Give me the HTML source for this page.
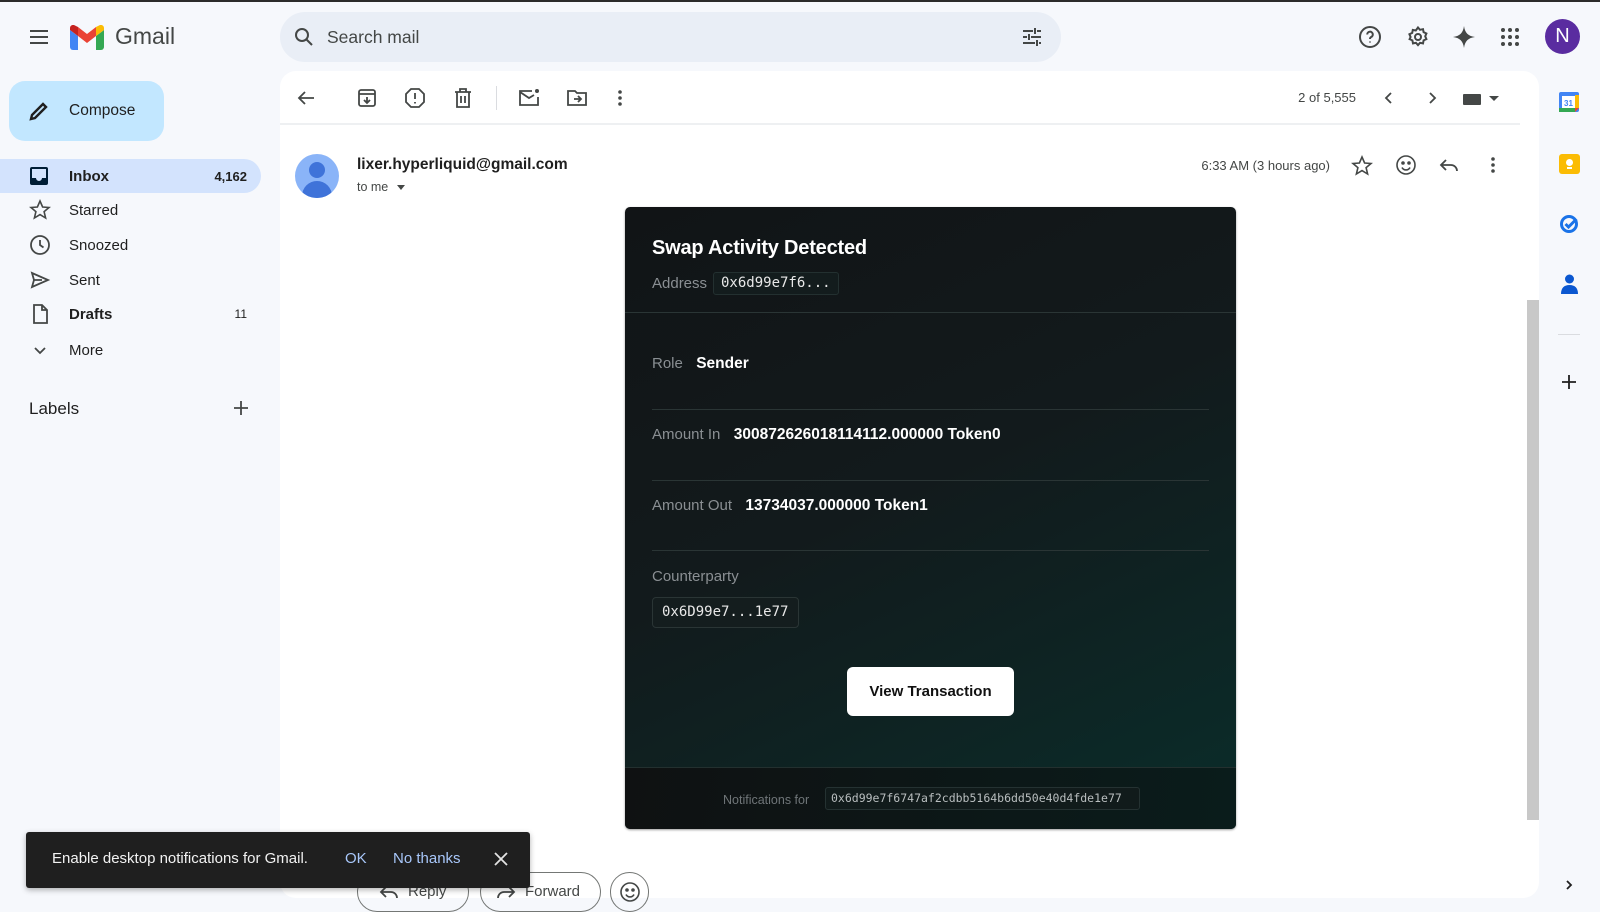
<!DOCTYPE html>
<html><head><meta charset="utf-8"><style>
*{box-sizing:border-box;margin:0;padding:0}
body{width:1600px;height:908px;overflow:hidden;background:#f6f8fc;font-family:"Liberation Sans",Arial,sans-serif;color:#1f1f1f;position:relative}
.a{position:absolute}
.ic{position:absolute;width:24px;height:24px;fill:none;stroke:#444746;stroke-width:2}
.nav{position:absolute;left:0;width:261px;height:34px;font-size:15px;display:flex;align-items:center}
.nav .t{position:absolute;left:69px}
.nav .n{position:absolute;right:14px;font-size:13px}
.mono{font-family:"DejaVu Sans Mono","Liberation Mono",monospace}
.lbl{color:#8a8f93;font-size:15px}
.val{color:#fff;font-size:15.5px;font-weight:bold}
.hl{position:absolute;left:27px;right:27px;height:1px;background:#2a3535}
</style></head><body>
<div class="a" style="left:0;top:0;width:1600px;height:2px;background:#2b2b2b"></div>
<svg class="ic" style="left:27px;top:25px" viewBox="0 0 24 24"><path d="M3 6h18M3 12h18M3 18h18"/></svg>
<svg class="a" style="left:70px;top:25px" width="34" height="25" viewBox="0 0 34 25"><path d="M0 5v17a3 3 0 0 0 3 3h5V11z" fill="#4285f4"/><path d="M26 25h5a3 3 0 0 0 3-3V5l-8 6z" fill="#34a853"/><path d="M26 2v9l8-6V3c0-2.5-3-4-5-2.5z" fill="#fbbc04"/><path d="M8 11V2l9 7 9-7v9l-9 7z" fill="#ea4335"/><path d="M0 3v2l8 6V2L5 .5C3-1 0 .5 0 3z" fill="#c5221f"/></svg>
<div class="a" style="left:115px;top:23px;font-size:23px;color:#444746">Gmail</div>
<div class="a" style="left:280px;top:12px;width:781px;height:50px;border-radius:25px;background:#e9eef6"></div>
<svg class="ic" style="left:292px;top:25px" viewBox="0 0 24 24"><circle cx="10" cy="10" r="6"/><path d="M14.5 14.5L20 20"/></svg>
<div class="a" style="left:327px;top:27px;font-size:17.5px;color:#444746">Search mail</div>
<svg class="ic" style="left:1020px;top:25px" viewBox="0 0 24 24"><path d="M3 6h10M17 6h4M15 3v6M3 12h4M11 12h10M9 9v6M3 18h12M19 18h2M17 15v6"/></svg>
<svg class="ic" style="left:1358px;top:25px" viewBox="0 0 24 24"><circle cx="12" cy="12" r="10"/><path d="M9.2 9.5a2.8 2.8 0 1 1 3.8 2.6c-.8.4-1 1-1 1.9M12 16.5v1"/></svg>
<svg class="ic" style="left:1406px;top:25px" viewBox="0 0 24 24"><circle cx="12" cy="12" r="3"/><path d="M12 2.5l2 2.3 3-.6.6 3 2.8 1.3-1.2 2.8 1.2 2.8-2.8 1.3-.6 3-3-.6-2 2.3-2-2.3-3 .6-.6-3-2.8-1.3L4.6 12 3.4 9.2l2.8-1.3.6-3 3 .6z"/></svg>
<svg class="a" style="left:1452px;top:25px" width="24" height="24" viewBox="0 0 24 24"><path d="M12 1C13 8 16 11 23 12 16 13 13 16 12 23 11 16 8 13 1 12 8 11 11 8 12 1z" fill="#444746"/></svg>
<svg class="a" style="left:1498px;top:25px" width="24" height="24" viewBox="0 0 24 24" fill="#444746"><circle cx="5" cy="5" r="2"/><circle cx="12" cy="5" r="2"/><circle cx="19" cy="5" r="2"/><circle cx="5" cy="12" r="2"/><circle cx="12" cy="12" r="2"/><circle cx="19" cy="12" r="2"/><circle cx="5" cy="19" r="2"/><circle cx="12" cy="19" r="2"/><circle cx="19" cy="19" r="2"/></svg>
<div class="a" style="left:1545px;top:19px;width:35px;height:35px;border-radius:50%;background:#5a2ca0;color:#fff;font-size:20px;text-align:center;line-height:35px">N</div>
<div class="a" style="left:9px;top:81px;width:155px;height:60px;border-radius:16px;background:#c2e7ff"></div>
<svg class="ic" style="left:27px;top:99px;stroke:#1f1f1f;stroke-width:2.4" viewBox="0 0 24 24"><path d="M4 20l1-4L16 5l3 3L8 19z"/></svg>
<div class="a" style="left:69px;top:102px;font-size:15.5px;color:#1f1f1f">Compose</div>
<div class="nav" style="top:159px;background:#d3e3fd;border-radius:0 17px 17px 0;font-weight:bold"><svg class="a" style="left:30px;top:8px" width="18" height="18" viewBox="0 0 18 18"><rect x="0" y="0" width="18" height="18" rx="2" fill="#001d35"/><path d="M2 2h14v9h-4a3 3 0 0 1-6 0H2z" fill="#d3e3fd"/></svg><span class="t">Inbox</span><span class="n">4,162</span></div>
<div class="nav" style="top:193px"><svg class="ic" style="left:28px;top:5px;stroke-width:1.6" viewBox="0 0 24 24"><path d="M12 3l2.6 6 6.4.5-4.9 4.2 1.5 6.3L12 16.6 6.4 20l1.5-6.3L3 9.5 9.4 9z"/></svg><span class="t">Starred</span></div>
<div class="nav" style="top:228px"><svg class="ic" style="left:28px;top:5px;stroke-width:1.8" viewBox="0 0 24 24"><circle cx="12" cy="12" r="9"/><path d="M12 7v5l3.5 2.5"/></svg><span class="t">Snoozed</span></div>
<div class="nav" style="top:263px"><svg class="ic" style="left:28px;top:5px;stroke-width:1.8" viewBox="0 0 24 24"><path d="M4 5l16 7-16 7 2-7zM6 12h8"/></svg><span class="t">Sent</span></div>
<div class="nav" style="top:297px;font-weight:bold"><svg class="ic" style="left:28px;top:5px;stroke-width:1.8" viewBox="0 0 24 24"><path d="M6 3h8l5 5v13H6zM14 3v5h5"/></svg><span class="t">Drafts</span><span class="n" style="font-weight:normal;font-size:12px">11</span></div>
<div class="nav" style="top:333px"><svg class="ic" style="left:28px;top:5px;stroke-width:1.8" viewBox="0 0 24 24"><path d="M7 10l5 5 5-5"/></svg><span class="t">More</span></div>
<div class="a" style="left:29px;top:399px;font-size:17px;color:#1f1f1f">Labels</div>
<svg class="ic" style="left:229px;top:396px;stroke-width:1.8" viewBox="0 0 24 24"><path d="M12 5v14M5 12h14"/></svg>
<div class="a" style="left:280px;top:71px;width:1259px;height:827px;border-radius:16px;background:#fff"></div>
<svg class="ic" style="left:294px;top:86px;stroke-width:1.8" viewBox="0 0 24 24"><path d="M20 12H5M11 6l-6 6 6 6"/></svg>
<svg class="ic" style="left:355px;top:86px;stroke-width:1.8" viewBox="0 0 24 24"><rect x="4" y="4" width="16" height="16" rx="2"/><path d="M4 8h16M12 11v6M9 14l3 3 3-3"/></svg>
<svg class="ic" style="left:403px;top:86px;stroke-width:1.8" viewBox="0 0 24 24"><path d="M8 3h8l5 5v8l-5 5H8l-5-5V8z"/><path d="M12 7v6M12 16v1.5"/></svg>
<svg class="ic" style="left:451px;top:86px;stroke-width:1.8" viewBox="0 0 24 24"><path d="M4 6h16M9 6V3h6v3M6 6v15h12V6M10 10v7M14 10v7"/></svg>
<div class="a" style="left:496px;top:86px;width:1px;height:24px;background:#dadce0"></div>
<svg class="ic" style="left:517px;top:86px;stroke-width:1.8" viewBox="0 0 24 24"><path d="M15 5H3v14h18v-8M3 6l9 6 5-3"/><circle cx="20" cy="5" r="2" fill="#444746" stroke="none"/></svg>
<svg class="ic" style="left:565px;top:86px;stroke-width:1.8" viewBox="0 0 24 24"><path d="M3 5h7l2 2h9v12H3zM9 13h7M13 10l3 3-3 3"/></svg>
<svg class="a" style="left:608px;top:86px" width="24" height="24" viewBox="0 0 24 24" fill="#444746"><circle cx="12" cy="6" r="1.8"/><circle cx="12" cy="12" r="1.8"/><circle cx="12" cy="18" r="1.8"/></svg>
<div class="a" style="left:1280px;top:90px;width:76px;text-align:right;font-size:13px;color:#444746">2 of 5,555</div>
<svg class="ic" style="left:1377px;top:86px;stroke-width:1.8" viewBox="0 0 24 24"><path d="M14 7l-5 5 5 5"/></svg>
<svg class="ic" style="left:1420px;top:86px;stroke-width:1.8" viewBox="0 0 24 24"><path d="M10 7l5 5-5 5"/></svg>
<div class="a" style="left:1463px;top:94px;width:18px;height:11px;background:#444746;border-radius:1px"></div>
<div class="a" style="left:1489px;top:96px;border:5px solid transparent;border-top:5px solid #444746"></div>
<div class="a" style="left:280px;top:123px;width:1240px;height:2px;background:#eef0f2"></div>
<div class="a" style="left:295px;top:154px;width:44px;height:44px;border-radius:50%;background:#8ab4f8;overflow:hidden"><div class="a" style="left:14px;top:8px;width:16px;height:16px;border-radius:50%;background:#3f73d9"></div><div class="a" style="left:7px;top:27px;width:30px;height:22px;border-radius:15px 15px 0 0;background:#3f73d9"></div></div>
<div class="a" style="left:357px;top:156px;font-size:15.5px;font-weight:bold;color:#1f1f1f">lixer.hyperliquid@gmail.com</div>
<div class="a" style="left:357px;top:180px;font-size:12.5px;color:#444746">to me</div>
<div class="a" style="left:397px;top:185px;border:4px solid transparent;border-top:5px solid #444746"></div>
<div class="a" style="left:1150px;top:158px;width:180px;text-align:right;font-size:13px;color:#444746">6:33 AM (3 hours ago)</div>
<svg class="ic" style="left:1350px;top:154px;stroke-width:1.6" viewBox="0 0 24 24"><path d="M12 3l2.6 6 6.4.5-4.9 4.2 1.5 6.3L12 16.6 6.4 20l1.5-6.3L3 9.5 9.4 9z"/></svg>
<svg class="ic" style="left:1394px;top:153px;stroke-width:1.6" viewBox="0 0 24 24"><circle cx="12" cy="12" r="9"/><circle cx="9" cy="10" r="1" fill="#444746"/><circle cx="15" cy="10" r="1" fill="#444746"/><path d="M8 14.5a4.5 4.5 0 0 0 8 0"/></svg>
<svg class="ic" style="left:1437px;top:153px;stroke-width:1.8" viewBox="0 0 24 24"><path d="M9 7l-5 5 5 5M4 12h10a6 6 0 0 1 6 6"/></svg>
<svg class="a" style="left:1481px;top:153px" width="24" height="24" viewBox="0 0 24 24" fill="#444746"><circle cx="12" cy="6" r="1.8"/><circle cx="12" cy="12" r="1.8"/><circle cx="12" cy="18" r="1.8"/></svg>
<div class="a" style="left:625px;top:207px;width:611px;height:622px;border-radius:5px;background:linear-gradient(155deg,#111416 0%,#121a1c 45%,#0a2d2a 100%);overflow:hidden;box-shadow:0 1px 2px rgba(0,0,0,.4)">
 <div class="a" style="left:27px;top:30px;font-size:20px;font-weight:bold;color:#fff;letter-spacing:-.2px">Swap Activity Detected</div>
 <div class="a lbl" style="left:27px;top:68px">Address</div>
 <div class="a mono" style="left:88px;top:65px;height:23px;padding:0 7px;border:1px solid #233030;border-radius:3px;background:#131c1d;color:#e8e8e8;font-size:14px;line-height:21px">0x6d99e7f6...</div>
 <div class="a" style="left:0;right:0;top:105px;height:1px;background:#2a3535"></div>
 <div class="a" style="left:27px;top:148px"><span class="lbl">Role</span>&nbsp;&nbsp;&nbsp;<span class="val">Sender</span></div>
 <div class="hl" style="top:202px"></div>
 <div class="a" style="left:27px;top:219px"><span class="lbl">Amount In</span>&nbsp;&nbsp;&nbsp;<span class="val">300872626018114112.000000 Token0</span></div>
 <div class="hl" style="top:273px"></div>
 <div class="a" style="left:27px;top:290px"><span class="lbl">Amount Out</span>&nbsp;&nbsp;&nbsp;<span class="val">13734037.000000 Token1</span></div>
 <div class="hl" style="top:343px"></div>
 <div class="a lbl" style="left:27px;top:361px">Counterparty</div>
 <div class="a mono" style="left:27px;top:390px;width:147px;height:31px;border:1px solid #2a3535;border-radius:4px;background:#141d1e;color:#e8e8e8;font-size:14px;line-height:29px;padding-left:9px">0x6D99e7...1e77</div>
 <div class="a" style="left:222px;top:460px;width:167px;height:49px;border-radius:6px;background:#fff;color:#111;font-size:15px;font-weight:bold;text-align:center;line-height:49px">View Transaction</div>
 <div class="a" style="left:0;right:0;top:560px;bottom:0;background:linear-gradient(100deg,#0f1112,#0a1c1b);border-top:1px solid #23302f"></div>
 <div class="a" style="left:98px;top:582px;font-size:12.5px;color:#6f7578;line-height:22px">Notifications for</div>
 <div class="a mono" style="left:200px;top:580px;width:315px;height:23px;border:1px solid #253232;border-radius:3px;background:#111b1b;color:#b9bebf;font-size:11.5px;line-height:21px;padding-left:5px">0x6d99e7f6747af2cdbb5164b6dd50e40d4fde1e77</div>
</div>
<div class="a" style="left:1527px;top:300px;width:12px;height:520px;background:#c8c8c8"></div>
<div class="a" style="left:357px;top:872px;width:112px;height:40px;border:1px solid #747775;border-radius:20px;font-size:15px;color:#444746;padding:10px 0 0 50px">Reply</div>
<svg class="ic" style="left:377px;top:880px;stroke-width:1.8" viewBox="0 0 24 24"><path d="M9 7l-5 5 5 5M4 12h10a6 6 0 0 1 6 6"/></svg>
<div class="a" style="left:480px;top:872px;width:121px;height:40px;border:1px solid #747775;border-radius:20px;font-size:15px;color:#444746;padding:10px 0 0 44px">Forward</div>
<svg class="ic" style="left:494px;top:880px;stroke-width:1.8" viewBox="0 0 24 24"><path d="M15 7l5 5-5 5M20 12H10a6 6 0 0 0-6 6"/></svg>
<div class="a" style="left:610px;top:872px;width:39px;height:40px;border:1px solid #747775;border-radius:20px"></div>
<svg class="ic" style="left:618px;top:880px;stroke-width:1.6" viewBox="0 0 24 24"><circle cx="12" cy="12" r="9"/><circle cx="9" cy="10" r="1" fill="#444746"/><circle cx="15" cy="10" r="1" fill="#444746"/><path d="M8 14.5a4.5 4.5 0 0 0 8 0"/></svg>
<div class="a" style="left:26px;top:832px;width:504px;height:56px;background:#1f1f1f;border-radius:3px;box-shadow:0 2px 6px rgba(0,0,0,.3)"></div>
<div class="a" style="left:52px;top:850px;font-size:15px;color:#f2f2f2">Enable desktop notifications for Gmail.</div>
<div class="a" style="left:345px;top:850px;font-size:15px;color:#a8c7fa">OK</div>
<div class="a" style="left:393px;top:850px;font-size:15px;color:#a8c7fa">No thanks</div>
<svg class="ic" style="left:489px;top:847px;stroke:#e3e3e3;stroke-width:1.8" viewBox="0 0 24 24"><path d="M6 6l12 12M18 6L6 18"/></svg>
<svg class="a" style="left:1559px;top:92px" width="20" height="20" viewBox="0 0 20 20"><rect x="0" y="0" width="20" height="20" rx="2" fill="#4285f4"/><rect x="3" y="4" width="14" height="12" fill="#fff"/><rect x="0" y="16" width="16" height="4" fill="#34a853"/><path d="M16 16h4l-4 4z" fill="#ea4335"/><rect x="16" y="3" width="4" height="13" fill="#fbbc04"/><text x="9.5" y="14" font-size="8" text-anchor="middle" fill="#4285f4" font-family="Liberation Sans" font-weight="bold">31</text></svg>
<div class="a" style="left:1559px;top:154px;width:21px;height:20px;border-radius:3px;background:#fbbc04"><div class="a" style="left:7px;top:5px;width:7px;height:7px;border-radius:50%;background:#fff"></div><div class="a" style="left:8px;top:13px;width:5px;height:2px;background:#fff"></div></div>
<svg class="a" style="left:1559px;top:213px" width="21" height="21" viewBox="0 0 21 21"><circle cx="10" cy="11" r="7.5" fill="none" stroke="#1a73e8" stroke-width="3"/><path d="M6.5 11l3 3 8-8" fill="none" stroke="#1a73e8" stroke-width="3"/></svg>
<svg class="a" style="left:1560px;top:274px" width="19" height="21" viewBox="0 0 19 21"><circle cx="9.5" cy="5" r="4.5" fill="#0b57d0"/><path d="M1 20c0-6 3-9 8.5-9S18 14 18 20z" fill="#0b57d0"/></svg>
<div class="a" style="left:1558px;top:334px;width:22px;height:1px;background:#dadce0"></div>
<svg class="ic" style="left:1557px;top:370px;stroke:#1f1f1f;stroke-width:1.8" viewBox="0 0 24 24"><path d="M12 5v14M5 12h14"/></svg>
<svg class="ic" style="left:1557px;top:873px;stroke:#1f1f1f;stroke-width:1.8" viewBox="0 0 24 24"><path d="M10 8l4 4-4 4"/></svg>
</body></html>
